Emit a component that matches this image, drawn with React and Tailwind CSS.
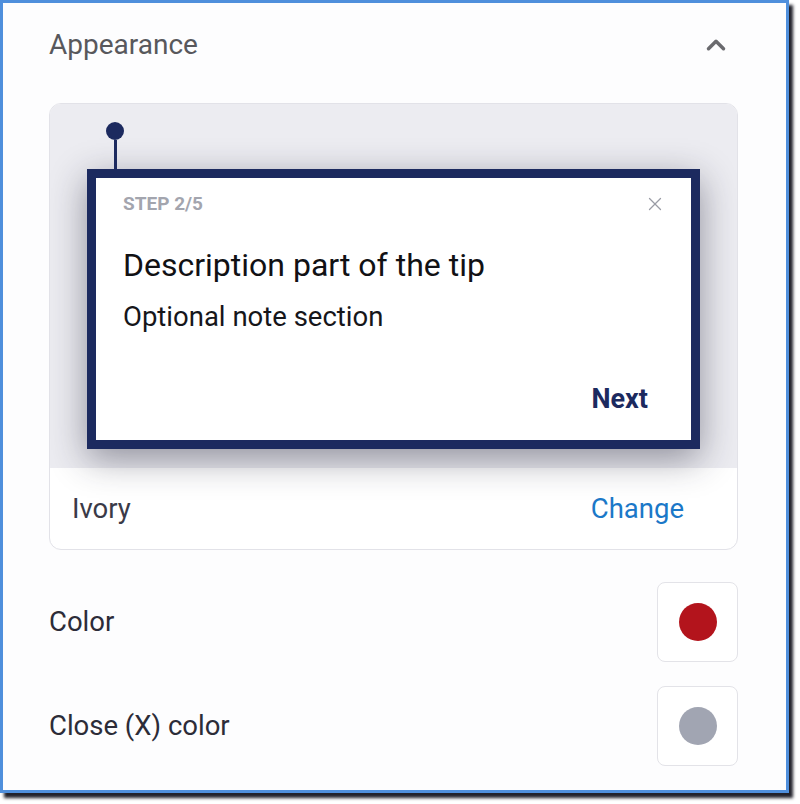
import { ChevronUp, X } from "lucide-react";

const Swatch = ({ color }) => (
  <div className="w-[81px] h-[80px] rounded-[8px] border border-[#e3e3e8] bg-white flex items-center justify-center">
    <div className={`w-[38px] h-[38px] rounded-full ${color}`} />
  </div>
);

const App = () => {
  return (
    <div className="w-[800px] h-[804px] bg-white" style={{ fontFamily: "Roboto, 'Liberation Sans', sans-serif" }}>
      <div className="w-[789px] h-[793px] border-[3px] border-[#4f8fdc] bg-[#fdfdfe] shadow-[4px_5px_3px_rgba(10,10,20,0.9)] pl-[46px] pr-[48px] flex flex-col">
        {/* header */}
        <div className="pt-[26px] flex items-center justify-between">
          <h2 className="text-[28px] leading-[32px] text-[#58585c]">Appearance</h2>
          <ChevronUp className="w-[30px] h-[30px] mr-[7px] text-[#6a6a6e]" strokeWidth={2.8} />
        </div>

        {/* theme card */}
        <div className="mt-[42px] rounded-[12px] border border-[#e2e2e8] bg-white overflow-hidden">
          <div className="bg-[#ececf1] pt-[18px] pb-[19px] px-[37px]">
            <div className="ml-[19px] w-[18px] flex flex-col items-center">
              <div className="w-[18px] h-[18px] rounded-full bg-[#1c2a5f]" />
              <div className="w-[3px] h-[29px] bg-[#1c2a5f]" />
            </div>
            <div className="border-[9px] border-[#1c2a5f] bg-white shadow-[0_10px_34px_rgba(30,30,50,0.45)]">
              <div className="pt-[16px] pb-[25px] pl-[27px] pr-[25px]">
                <div className="h-[20px] flex items-center justify-between">
                  <span className="text-[19px] leading-[20px] font-bold text-[#a3a5ae]">STEP 2/5</span>
                  <X className="w-[22px] h-[22px] -mt-[1px] text-[#9a9ca5]" strokeWidth={1.4} />
                </div>
                <p className="mt-[31px] text-[32px] leading-[40px] text-[#111114]">Description part of the tip</p>
                <p className="mt-[16px] text-[27.5px] leading-[32px] text-[#16161a]">Optional note section</p>
                <div className="mt-[50px] flex justify-end pr-[18px]">
                  <button className="text-[27px] leading-[32px] font-bold text-[#1c2a5f]">Next</button>
                </div>
              </div>
            </div>
          </div>
          <div className="h-[81px] flex items-center justify-between pl-[22px] pr-[53px]">
            <span className="text-[27.5px] leading-[32px] text-[#3a3a48]">Ivory</span>
            <button className="text-[27.5px] leading-[32px] text-[#1b78c8]">Change</button>
          </div>
        </div>

        {/* colors */}
        <div className="mt-[32px] flex items-center justify-between">
          <span className="text-[27.5px] leading-[32px] text-[#2c2c38]">Color</span>
          <Swatch color="bg-[#b3141c]" />
        </div>
        <div className="mt-[24px] flex items-center justify-between">
          <span className="text-[27.5px] leading-[32px] text-[#2c2c38]">Close (X) color</span>
          <Swatch color="bg-[#a1a5b2]" />
        </div>
      </div>
    </div>
  );
};

export default App;
